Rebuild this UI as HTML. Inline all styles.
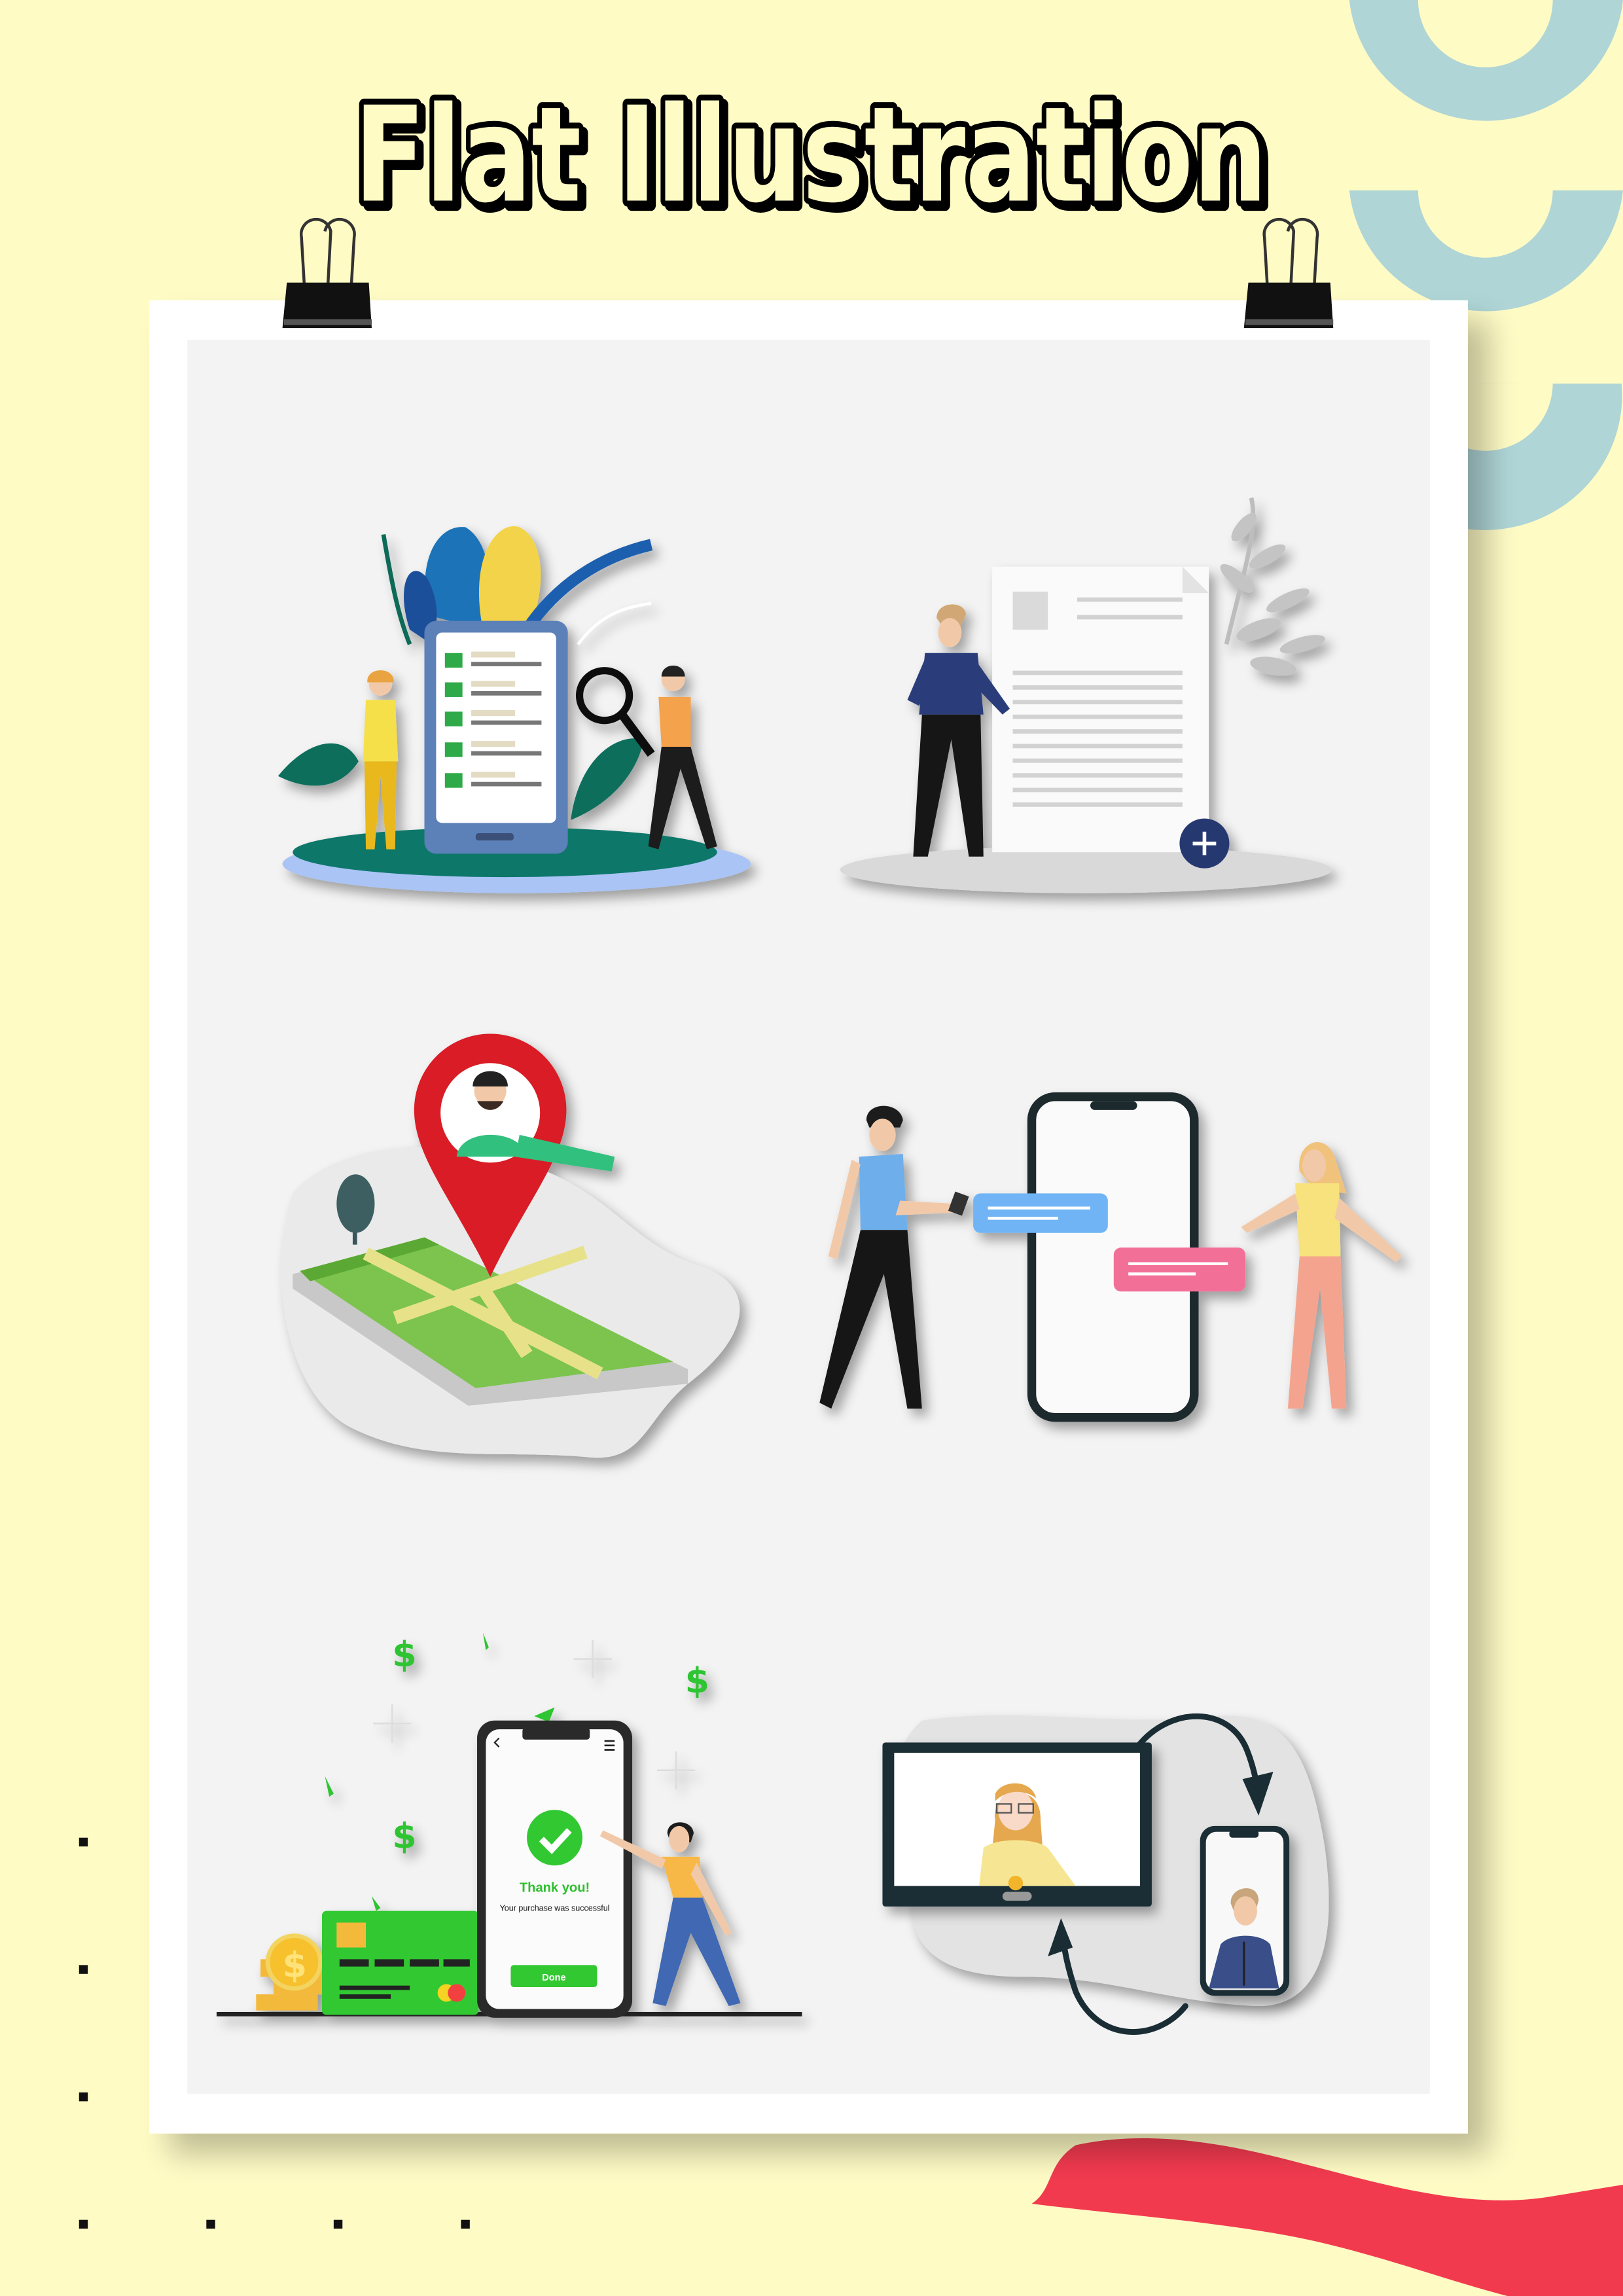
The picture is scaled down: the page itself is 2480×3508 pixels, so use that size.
<!DOCTYPE html>
<html><head><meta charset="utf-8"><style>
html,body{margin:0;padding:0;background:#FFFBC5;}
svg{display:block;}
</style></head><body>
<svg width="2480" height="3508" viewBox="0 0 1109 1568" preserveAspectRatio="none" xmlns="http://www.w3.org/2000/svg" font-family="Liberation Sans, sans-serif">
<defs>
<filter id="sh" x="-20%" y="-20%" width="150%" height="150%"><feGaussianBlur in="SourceAlpha" stdDeviation="4"/><feOffset dx="4" dy="5"/><feComponentTransfer><feFuncA type="linear" slope="0.35"/></feComponentTransfer><feMerge><feMergeNode/><feMergeNode in="SourceGraphic"/></feMerge></filter>
<filter id="psh" x="-10%" y="-10%" width="130%" height="130%"><feGaussianBlur in="SourceAlpha" stdDeviation="10"/><feOffset dx="14" dy="14"/><feComponentTransfer><feFuncA type="linear" slope="0.25"/></feComponentTransfer><feMerge><feMergeNode/><feMergeNode in="SourceGraphic"/></feMerge></filter>
</defs>
<rect width="1109" height="1568" fill="#FFFBC5"/>
<!-- rings -->
<path d="M922 0 L969 0 A46 46 0 0 0 1061 0 L1109 0 A94 92 0 0 1 922 0Z" fill="#AFD5D6"/>
<path d="M922 130 L969 130 A46 46 0 0 0 1061 130 L1109 130 A94 92 0 0 1 922 130Z" fill="#AFD5D6"/>
<path d="M976 262 L1108 262 A94 92 0 0 1 976 354Z" fill="#AFD5D6"/>
<path d="M1002 262 L1061 262 A46 46 0 0 1 1002 306Z" fill="#FFFBC5"/>
<!-- red brush -->
<path d="M735 1465 C780 1455 830 1462 880 1475 C940 1490 1000 1510 1060 1500 L1109 1492 L1109 1568 L1030 1568 C980 1555 930 1535 870 1525 C810 1515 760 1512 705 1505 C720 1495 715 1478 735 1465Z" fill="#F23A4F"/>
<!-- dots -->
<g fill="#111"><rect x="54" y="1255" width="6" height="6"/><rect x="54" y="1342" width="6" height="6"/><rect x="54" y="1429" width="6" height="6"/><rect x="54" y="1516" width="6" height="6"/><rect x="141" y="1516" width="6" height="6"/><rect x="228" y="1516" width="6" height="6"/><rect x="315" y="1516" width="6" height="6"/></g>
<!-- title -->
<g font-family="DejaVu Sans, sans-serif" font-weight="bold" font-size="90">
<text x="245" y="140" textLength="624" lengthAdjust="spacingAndGlyphs" fill="#000" stroke="#000" stroke-width="8" stroke-linejoin="round">Flat Illustration</text>
<text x="242" y="137" textLength="624" lengthAdjust="spacingAndGlyphs" fill="#FFFBC5" stroke="#000" stroke-width="8" stroke-linejoin="round" paint-order="stroke">Flat Illustration</text>
</g>
<!-- paper -->
<rect x="102" y="205" width="901" height="1252" fill="#fff" filter="url(#psh)"/>
<rect x="128" y="232" width="849" height="1198" fill="#F3F3F3"/>
<!-- clips -->
<g>
<path d="M208 196 L206 162 A10 10 0 0 1 226 158 L224 196" fill="none" stroke="#333" stroke-width="2"/>
<path d="M240 196 L242 162 A10 10 0 0 0 222 158" fill="none" stroke="#333" stroke-width="2"/>
<path d="M196 193 L252 193 L254 224 L193 224Z" fill="#111"/>
<rect x="194" y="218" width="60" height="4" fill="#555"/>
<path d="M866 196 L864 162 A10 10 0 0 1 884 158 L882 196" fill="none" stroke="#333" stroke-width="2"/>
<path d="M898 196 L900 162 A10 10 0 0 0 880 158" fill="none" stroke="#333" stroke-width="2"/>
<path d="M853 193 L909 193 L911 224 L850 224Z" fill="#111"/>
<rect x="851" y="218" width="60" height="4" fill="#555"/>
</g>

<!-- ILLUSTRATION 1 -->
<g filter="url(#sh)">
<ellipse cx="353" cy="590" rx="160" ry="20" fill="#A9C4F5"/>
<ellipse cx="345" cy="582" rx="145" ry="17" fill="#10776A"/>
<path d="M292 420 C285 380 300 358 318 360 C335 370 338 400 330 430Z" fill="#1F73B7"/>
<path d="M330 430 C320 380 340 355 355 360 C375 370 372 410 360 432Z" fill="#F3D34A"/>
<path d="M280 430 C270 400 280 380 292 395 C300 410 300 425 295 440Z" fill="#1E4F99"/>
<path d="M262 365 C268 400 272 420 280 440" stroke="#0F6B56" stroke-width="3" fill="none"/>
<path d="M360 430 C380 400 410 380 445 372" stroke="#1F5FAE" stroke-width="8" fill="none"/>
<path d="M395 440 C410 420 425 415 445 412" stroke="#fff" stroke-width="2" fill="none"/>
<path d="M190 530 C210 505 235 500 245 520 C232 540 210 540 190 530Z" fill="#0E6E5B"/>
<path d="M390 560 C395 520 420 500 440 505 C435 530 415 550 390 560Z" fill="#0E6E5B"/>
<rect x="290" y="424" width="98" height="159" rx="8" fill="#5C80B8"/>
<rect x="298" y="432" width="82" height="130" rx="4" fill="#fff"/>
<rect x="325" y="569" width="26" height="5" rx="2" fill="#3A4F78"/>
<g fill="#2EAA4A"><rect x="304" y="446" width="12" height="10"/><rect x="304" y="466" width="12" height="10"/><rect x="304" y="486" width="12" height="10"/><rect x="304" y="507" width="12" height="10"/><rect x="304" y="528" width="12" height="10"/></g>
<g fill="#777"><rect x="322" y="452" width="48" height="3"/><rect x="322" y="472" width="48" height="3"/><rect x="322" y="492" width="48" height="3"/><rect x="322" y="513" width="48" height="3"/><rect x="322" y="534" width="48" height="3"/></g>
<g fill="#E3DCC3"><rect x="322" y="445" width="30" height="4"/><rect x="322" y="465" width="30" height="4"/><rect x="322" y="485" width="30" height="4"/><rect x="322" y="506" width="30" height="4"/><rect x="322" y="527" width="30" height="4"/></g>
<circle cx="413" cy="475" r="17" fill="none" stroke="#111" stroke-width="5"/>
<path d="M425 488 L445 515" stroke="#111" stroke-width="6"/>
<circle cx="260" cy="467" r="8" fill="#F2C9A8"/><path d="M251 466 C250 455 270 455 269 466" fill="#E9A33F"/>
<path d="M250 478 L270 478 L272 520 L248 520Z" fill="#F5E04A"/>
<path d="M249 520 L271 520 L270 580 L264 580 L260 530 L256 580 L250 580Z" fill="#E8B81F"/>
<circle cx="460" cy="464" r="8" fill="#F2C9A8"/><path d="M452 462 C452 452 468 452 468 462" fill="#222"/>
<path d="M450 476 L472 476 L472 510 L452 510Z" fill="#F4A24B"/>
<path d="M452 510 L472 510 L490 578 L483 580 L465 525 L450 580 L443 578Z" fill="#1A1A1A"/>
</g>

<!-- ILLUSTRATION 2 -->
<g filter="url(#sh)">
<ellipse cx="742" cy="594" rx="168" ry="16" fill="#D9D9D9"/>
<path d="M838 440 C850 390 860 360 855 340" stroke="#BDBDBD" stroke-width="3" fill="none"/>
<g fill="#C4C4C4"><ellipse cx="850" cy="360" rx="12" ry="5" transform="rotate(-50 850 360)"/><ellipse cx="866" cy="380" rx="14" ry="5" transform="rotate(-30 866 380)"/><ellipse cx="845" cy="395" rx="14" ry="5" transform="rotate(40 845 395)"/><ellipse cx="880" cy="410" rx="16" ry="5" transform="rotate(-25 880 410)"/><ellipse cx="860" cy="430" rx="16" ry="6" transform="rotate(-20 860 430)"/><ellipse cx="890" cy="440" rx="16" ry="5" transform="rotate(-15 890 440)"/><ellipse cx="870" cy="455" rx="16" ry="6" transform="rotate(10 870 455)"/></g>
<rect x="678" y="387" width="148" height="195" fill="#FAFAFA"/>
<path d="M808 387 L826 405 L808 405Z" fill="#E3E3E3"/>
<rect x="692" y="404" width="24" height="26" fill="#DADADA"/>
<g fill="#D2D2D2"><rect x="736" y="408" width="72" height="3"/><rect x="736" y="420" width="72" height="3"/>
<rect x="692" y="458" width="116" height="3"/><rect x="692" y="468" width="116" height="3"/><rect x="692" y="478" width="116" height="3"/><rect x="692" y="488" width="116" height="3"/><rect x="692" y="498" width="116" height="3"/><rect x="692" y="508" width="116" height="3"/><rect x="692" y="518" width="116" height="3"/><rect x="692" y="528" width="116" height="3"/><rect x="692" y="538" width="116" height="3"/><rect x="692" y="548" width="116" height="3"/></g>
<circle cx="823" cy="576" r="17" fill="#27396F"/>
<path d="M815 576 H831 M823 568 V584" stroke="#fff" stroke-width="2.5"/>
<path d="M640 422 C640 410 660 410 660 420 L656 428 L644 428Z" fill="#D1A774"/>
<ellipse cx="649" cy="432" rx="8" ry="10" fill="#F2C9A8"/>
<path d="M632 446 L668 446 L672 488 L628 488Z" fill="#2C3E7A"/>
<path d="M666 450 L690 484 L685 488 L660 462Z" fill="#2C3E7A"/>
<path d="M632 450 L620 478 L628 482 L638 462Z" fill="#2C3E7A"/>
<path d="M630 488 L670 488 L672 585 L662 585 L650 505 L634 585 L624 585Z" fill="#151515"/>
</g>

<!-- ILLUSTRATION 3 -->
<g filter="url(#sh)">
<path d="M200 815 C230 780 300 775 360 795 C420 815 430 850 480 865 C520 880 510 915 470 945 C440 970 440 1000 400 995 C340 990 290 1000 240 975 C200 955 180 880 200 815Z" fill="#EAEAEA"/>
<path d="M200 870 L290 850 L470 935 L470 945 L320 960 L200 880Z" fill="#C8C8C8"/>
<path d="M205 868 L290 845 L460 930 L325 948Z" fill="#7BC44E"/>
<path d="M205 868 L290 845 L300 850 L212 875Z" fill="#5CA836"/>
<path d="M250 856 L410 938 M270 900 L400 855 M330 880 L360 925" stroke="#E7E28A" stroke-width="9"/>
<rect x="241" y="820" width="3" height="30" fill="#37575A"/>
<ellipse cx="243" cy="822" rx="13" ry="20" fill="#3D5E62"/>
<path d="M283 758 A52 52 0 0 1 387 758 C387 790 360 820 335 872 C310 820 283 790 283 758Z" fill="#D91F26"/>
<circle cx="335" cy="760" r="34" fill="#fff"/>
<path d="M312 790 C314 770 356 770 360 790Z" fill="#30C07E"/>
<path d="M355 775 L420 790 L418 800 L352 790Z" fill="#30C07E"/>
<circle cx="335" cy="745" r="11" fill="#F2C9A8"/>
<path d="M323 742 C323 728 347 728 347 742Z" fill="#222"/>
<path d="M326 752 C330 760 340 760 344 752" fill="#3A2A20"/>
</g>

<!-- ILLUSTRATION 4 -->
<g filter="url(#sh)">
<rect x="705" y="749" width="111" height="219" rx="16" fill="#FAFAFA" stroke="#1F2A2E" stroke-width="6"/>
<rect x="745" y="752" width="32" height="6" rx="3" fill="#1F2A2E"/>
<rect x="665" y="815" width="92" height="27" rx="5" fill="#6FB4F5"/>
<rect x="675" y="824" width="70" height="2" fill="#fff"/><rect x="675" y="831" width="48" height="2" fill="#fff"/>
<rect x="761" y="852" width="90" height="30" rx="5" fill="#F26F98"/>
<rect x="771" y="862" width="68" height="2" fill="#fff"/><rect x="771" y="869" width="46" height="2" fill="#fff"/>
<path d="M592 765 C592 752 615 752 617 765 L615 770 L594 770Z" fill="#1F1F1F"/>
<ellipse cx="603" cy="775" rx="9" ry="11" fill="#F2C9A8"/>
<path d="M587 790 L617 788 L620 840 L588 840Z" fill="#6EAEEA"/>
<path d="M615 820 L652 822 L652 828 L612 830Z" fill="#F2C9A8"/>
<rect x="650" y="815" width="10" height="14" fill="#333" transform="rotate(20 655 822)"/>
<path d="M588 795 L572 860 L566 858 L582 792Z" fill="#F2C9A8"/>
<path d="M588 840 L620 840 L630 962 L620 962 L604 870 L568 962 L560 958Z" fill="#151515"/>
<path d="M888 800 C885 780 905 772 912 790 L920 815 L898 812Z" fill="#F0C27B"/>
<ellipse cx="898" cy="796" rx="8" ry="11" fill="#F2C9A8"/>
<path d="M885 808 L915 808 L916 858 L888 858Z" fill="#F8E27D"/>
<path d="M885 815 L848 838 L852 842 L888 826Z" fill="#F2C9A8"/>
<path d="M915 818 L958 858 L954 862 L912 832Z" fill="#F2C9A8"/>
<path d="M888 858 L916 858 L920 962 L910 962 L902 880 L890 962 L880 962Z" fill="#F4A48E"/>
</g>

<!-- ILLUSTRATION 5 -->
<g filter="url(#sh)">
<rect x="148" y="1374" width="400" height="3" fill="#222"/>
<g fill="#2FC431" font-family="DejaVu Sans, sans-serif" font-weight="bold" font-size="24">
<text x="268" y="1138">$</text><text x="468" y="1156">$</text><text x="268" y="1262">$</text></g>
<g fill="#2FC431"><path d="M330 1115 l4 10 l-2 2z"/><path d="M222 1213 l6 12 l-3 2z"/><path d="M254 1295 l6 8 l-3 2z"/><path d="M365 1172 l14 -6 l-4 10z"/></g>
<g stroke="#DDD" stroke-width="1.2"><path d="M405 1120 v26 M392 1133 h26"/><path d="M268 1164 v26 M255 1177 h26"/><path d="M462 1196 v26 M449 1209 h26"/></g>
<g fill="#F3B93A"><rect x="175" y="1362" width="42" height="11"/><rect x="187" y="1350" width="40" height="12"/><rect x="178" y="1338" width="42" height="12"/></g>
<circle cx="201" cy="1340" r="18" fill="#F7C12E" stroke="#F3D460" stroke-width="3"/>
<text x="193" y="1350" font-size="24" font-weight="bold" fill="#FFE37A" font-family="DejaVu Sans, sans-serif">$</text>
<rect x="220" y="1305" width="107" height="71" rx="3" fill="#33C833"/>
<rect x="230" y="1313" width="20" height="17" fill="#F3B93A"/>
<g fill="#222"><rect x="232" y="1338" width="20" height="5"/><rect x="256" y="1338" width="20" height="5"/><rect x="280" y="1338" width="20" height="5"/><rect x="303" y="1338" width="18" height="5"/><rect x="232" y="1356" width="48" height="3"/><rect x="232" y="1362" width="35" height="3"/></g>
<circle cx="305" cy="1361" r="6" fill="#F6D324"/><circle cx="312" cy="1361" r="6" fill="#F23F3F"/>
<rect x="326" y="1175" width="106" height="203" rx="12" fill="#2A2A2A"/>
<rect x="332" y="1181" width="94" height="191" rx="9" fill="#FBFBFB"/>
<rect x="357" y="1180" width="46" height="8" rx="2" fill="#2A2A2A"/>
<path d="M341 1187 l-3 3 l3 3" stroke="#222" fill="none"/>
<path d="M413 1189 h7 M413 1192 h7 M413 1195 h7" stroke="#222" stroke-width="1.2"/>
<circle cx="379" cy="1255" r="19" fill="#33C833"/>
<path d="M370 1256 l7 7 l12 -13" stroke="#fff" stroke-width="4.5" fill="none"/>
<text x="379" y="1292" text-anchor="middle" font-size="9" font-weight="bold" fill="#2FBF2F">Thank you!</text>
<text x="379" y="1305" text-anchor="middle" font-size="5.6" fill="#111">Your purchase was successful</text>
<rect x="349" y="1342" width="59" height="15" rx="2" fill="#33C833"/>
<text x="378.5" y="1352.5" text-anchor="middle" font-size="6.5" font-weight="bold" fill="#fff">Done</text>
<path d="M456 1252 C456 1242 473 1242 474 1252 L472 1258 L458 1258Z" fill="#1B1B1B"/>
<ellipse cx="464" cy="1256" rx="7" ry="9" fill="#F2C9A8"/>
<path d="M452 1268 L478 1268 L480 1296 L460 1296Z" fill="#F7B847"/>
<path d="M455 1270 L412 1250 L410 1254 L452 1276Z" fill="#F2C9A8"/>
<path d="M476 1272 L500 1320 L496 1322 L472 1280Z" fill="#F2C9A8"/>
<path d="M460 1296 L480 1296 L506 1368 L498 1370 L472 1320 L455 1370 L446 1368Z" fill="#4067B3"/>
</g>

<!-- ILLUSTRATION 6 -->
<g filter="url(#sh)">
<path d="M630 1175 C700 1165 760 1180 830 1172 C880 1168 895 1200 905 1260 C915 1330 900 1370 860 1370 C800 1368 760 1350 700 1350 C640 1350 620 1330 622 1290 C600 1270 600 1200 630 1175Z" fill="#E3E3E3"/>
</g>
<g>
<rect x="603" y="1190" width="184" height="112" rx="2" fill="#1A2D35" filter="url(#sh)"/>
<rect x="611" y="1197" width="168" height="91" fill="#fff"/>
<rect x="685" y="1292" width="20" height="6" rx="3" fill="#999"/>
<path d="M680 1243 C676 1222 712 1215 711 1243 L714 1283 L676 1283Z" fill="#E5A84F"/>
<ellipse cx="694" cy="1236" rx="12" ry="14" fill="#F9D9C7"/>
<path d="M680 1225 C685 1215 705 1215 708 1228 C700 1222 688 1222 680 1230Z" fill="#E5A84F"/>
<rect x="681" y="1232" width="10" height="6" fill="none" stroke="#555" stroke-width="1"/><rect x="696" y="1232" width="10" height="6" fill="none" stroke="#555" stroke-width="1"/>
<path d="M669 1288 L672 1262 C680 1255 708 1255 716 1262 L735 1288Z" fill="#F6E693"/>
<circle cx="694" cy="1286" r="5" fill="#F2B42A"/>
<rect x="820" y="1247" width="61" height="116" rx="10" fill="#1A2D35" filter="url(#sh)"/>
<rect x="824" y="1251" width="53" height="108" rx="7" fill="#F8F8F8"/>
<rect x="840" y="1250" width="20" height="5" rx="2" fill="#1A2D35"/>
<path d="M841 1300 C840 1288 860 1285 860 1298 L858 1305 L843 1305Z" fill="#C9A57B"/>
<ellipse cx="851" cy="1305" rx="8" ry="10" fill="#F2C9A8"/>
<path d="M826 1358 L834 1328 C840 1320 862 1320 868 1328 L874 1358Z" fill="#3A4F8A"/>
<path d="M850 1326 L850 1356" stroke="#222" stroke-width="1.5"/>
<g fill="none" stroke="#1A2D35" stroke-width="4" stroke-linecap="round">
<path d="M778 1192 C800 1165 840 1165 852 1195 C858 1210 860 1225 860 1230"/>
<path d="M810 1370 C790 1395 750 1395 735 1360 C730 1345 728 1335 727 1328"/>
</g>
<path d="M849 1215 L870 1210 L860 1240Z" fill="#1A2D35"/>
<path d="M716 1336 L733 1330 L725 1310Z" fill="#1A2D35"/>
</g>
</svg>
</body></html>
